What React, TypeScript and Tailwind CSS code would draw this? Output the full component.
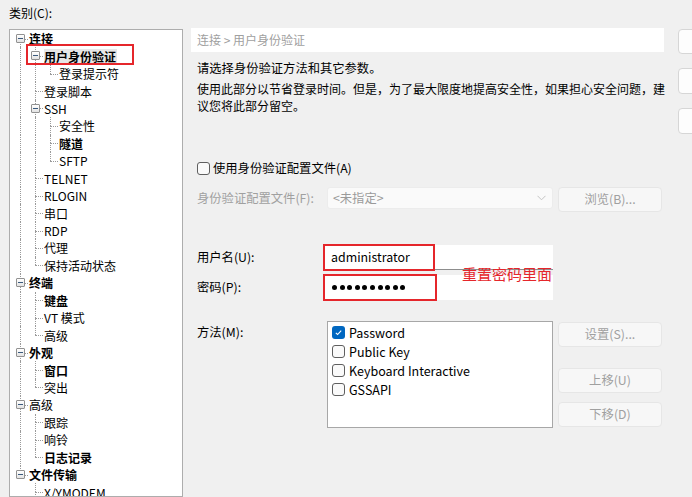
import React from 'react';

type Node = { label: string; bold?: boolean; sel?: boolean; children?: Node[] };

const tree: Node[] = [
  {
    label: '连接',
    bold: true,
    children: [
      { label: '用户身份验证', bold: true, sel: true, children: [{ label: '登录提示符' }] },
      { label: '登录脚本' },
      { label: 'SSH', children: [{ label: '安全性' }, { label: '隧道', bold: true }, { label: 'SFTP' }] },
      { label: 'TELNET' },
      { label: 'RLOGIN' },
      { label: '串口' },
      { label: 'RDP' },
      { label: '代理' },
      { label: '保持活动状态' },
    ],
  },
  { label: '终端', bold: true, children: [{ label: '键盘', bold: true }, { label: 'VT 模式' }, { label: '高级' }] },
  { label: '外观', bold: true, children: [{ label: '窗口', bold: true }, { label: '突出' }] },
  { label: '高级', children: [{ label: '跟踪' }, { label: '响铃' }, { label: '日志记录', bold: true }] },
  { label: '文件传输', bold: true, children: [{ label: 'X/YMODEM' }, { label: 'ZMODEM' }] },
];

type Row = { node: Node; guides: boolean[]; last: boolean; first: boolean };

function flatten(nodes: Node[], guides: boolean[], out: Row[]) {
  nodes.forEach((n, i) => {
    const last = i === nodes.length - 1;
    out.push({ node: n, guides, last, first: guides.length === 0 && i === 0 });
    if (n.children) flatten(n.children, [...guides, !last], out);
  });
  return out;
}

const rows = flatten(tree, [], []);

function Expander() {
  return (
    <div className="absolute left-[3px] top-[4px] flex h-[9px] w-[9px] items-center justify-center rounded-[1px] border border-[#919191] bg-gradient-to-b from-white to-[#e3e3e3]">
      <div className="h-[1px] w-[5px] bg-[#3b5a7d]" />
    </div>
  );
}

function TreeRow({ row }: { row: Row }) {
  const { node, guides, last, first } = row;
  return (
    <div className="flex h-[17.45px] items-stretch">
      {guides.map((g, i) => (
        <div key={i} className="relative w-[15px] shrink-0">
          {g && <div className="absolute bottom-0 left-[7px] top-0 border-l border-dotted border-[#9a9a9a]" />}
        </div>
      ))}
      <div className="relative w-[15px] shrink-0">
        {!first && <div className="absolute left-[7px] top-0 h-1/2 border-l border-dotted border-[#9a9a9a]" />}
        {!last && <div className="absolute bottom-0 left-[7px] top-1/2 border-l border-dotted border-[#9a9a9a]" />}
        <div className="absolute left-[7px] right-0 top-1/2 border-t border-dotted border-[#9a9a9a]" />
        {node.children && <Expander />}
      </div>
      <div className="flex items-center pl-[1px]">
        <span
          className={`whitespace-nowrap text-[12px] leading-[15px] text-black ${node.bold ? 'font-bold' : ''} ${
            node.sel ? 'bg-[#e6e6e6] pr-[1px]' : ''
          }`}
        >
          {node.label}
        </span>
      </div>
    </div>
  );
}

function Box({ checked }: { checked?: boolean }) {
  if (checked)
    return (
      <div className="flex h-[13px] w-[13px] shrink-0 items-center justify-center rounded-[3px] bg-[#0067c0]">
        <svg width="9" height="9" viewBox="0 0 9 9">
          <path d="M1.8 4.8 L3.6 6.5 L7.2 2.6" fill="none" stroke="white" strokeWidth="1.1" />
        </svg>
      </div>
    );
  return <div className="h-[13px] w-[13px] shrink-0 rounded-[3px] border border-[#5f5f5f] bg-[#fafafa]" />;
}

function GrayButton({ label }: { label: string }) {
  return (
    <div className="flex h-[25px] w-[104px] items-center justify-center rounded-[4px] border border-[#e6e6e6] bg-[#f7f7f7] text-[12.3px] text-[#a0a0a0]">
      {label}
    </div>
  );
}

export default function App() {
  const methods = [
    { label: 'Password', checked: true },
    { label: 'Public Key' },
    { label: 'Keyboard Interactive' },
    { label: 'GSSAPI' },
  ];

  return (
    <div className="relative flex h-[497px] w-[692px] overflow-hidden bg-[#f0f0f0] pl-[8px] font-['Noto_Sans_CJK_SC',sans-serif] text-black">
      {/* left: category tree */}
      <div className="flex w-[175px] shrink-0 flex-col">
        <div className="mt-[4px] h-[18px] pl-[1px] text-[12px] leading-[18px]">类别(C):</div>
        <div className="ml-[1px] mt-[7px] w-[174px] flex-1 overflow-hidden border border-[#adadad] bg-white pl-[3px]">
          {rows.map((r, i) => (
            <TreeRow key={i} row={r} />
          ))}
        </div>
      </div>

      {/* main panel */}
      <div className="ml-[8px] flex w-[473px] shrink-0 flex-col pt-[28px] text-[12.3px]">
        <div className="flex h-[24px] items-center bg-white pl-[6px] text-[12px] text-[#a0a0a0]">连接 &gt; 用户身份验证</div>
        <p className="mt-[8px] pl-[6px] leading-[17px]">请选择身份验证方法和其它参数。</p>
        <p className="mt-[3px] whitespace-nowrap pl-[6px] text-[12px] leading-[17px]">
          使用此部分以节省登录时间。但是，为了最大限度地提高安全性，如果担心安全问题，建
          <br />
          议您将此部分留空。
        </p>

        <div className="mt-[46px] flex h-[17px] items-center gap-[3px] pl-[6px]">
          <Box />
          <span className="leading-[17px]">使用身份验证配置文件(A)</span>
        </div>

        <div className="mt-[10px] flex items-start pl-[6px]">
          <div className="flex h-[22px] w-[130px] items-center text-[#a0a0a0]">身份验证配置文件(F):</div>
          <div className="flex h-[22px] w-[226px] items-center justify-between rounded-[3px] border border-[#ececec] bg-[#fafafa] pl-[5px] pr-[6px] text-[#9a9a9a]">
            <span>&lt;未指定&gt;</span>
            <svg width="9" height="6" viewBox="0 0 9 6">
              <path d="M0.5 0.8 L4.5 4.8 L8.5 0.8" fill="none" stroke="#c4c4c4" strokeWidth="1" />
            </svg>
          </div>
          <div className="ml-[5px]">
            <GrayButton label="浏览(B)..." />
          </div>
        </div>

        <div className="mt-[33px] flex pl-[6px]">
          <div className="flex h-[25px] w-[127px] items-center">用户名(U):</div>
          <div className="relative flex h-[25px] w-[229px] items-center border-b border-[#8d8d8d] bg-white pl-[7px] text-[12.4px]">
            administrator
            <div className="absolute -left-[1px] -top-[1px] h-[27px] w-[112px] border-2 border-[#e5262b]" />
          </div>
        </div>

        <div className="mt-[5px] flex pl-[6px]">
          <div className="flex h-[25px] w-[127px] items-center">密码(P):</div>
          <div className="relative flex h-[25px] w-[229px] items-center gap-[2.6px] bg-white pl-[8px]">
            {Array.from({ length: 10 }).map((_, i) => (
              <span key={i} className="h-[5px] w-[5px] rounded-full bg-black" />
            ))}
            <div className="absolute -left-[1px] -top-[1px] h-[27px] w-[114px] border-2 border-[#e5262b]" />
          </div>
          <span className="absolute left-[462px] top-[265px] text-[15px] leading-[18px] text-[#e5262b]">重置密码里面</span>
        </div>

        <div className="mt-[21px] flex items-start pl-[6px]">
          <div className="flex h-[22px] w-[130px] items-center">方法(M):</div>
          <div className="h-[107px] w-[226px] border border-[#a7a7a7] bg-white pl-[4px] pt-[1px]">
            {methods.map((m) => (
              <div key={m.label} className="flex h-[19px] items-center gap-[4px]">
                <Box checked={m.checked} />
                <span className="text-[12.5px] leading-[19px]">{m.label}</span>
              </div>
            ))}
          </div>
          <div className="ml-[5px] mt-[1px] flex flex-col">
            <GrayButton label="设置(S)..." />
            <div className="mt-[21px]">
              <GrayButton label="上移(U)" />
            </div>
            <div className="mt-[9px]">
              <GrayButton label="下移(D)" />
            </div>
          </div>
        </div>
      </div>

      {/* right: dialog buttons (clipped) */}
      <div className="ml-[14px] flex w-[40px] shrink-0 flex-col pt-[29px]">
        <div className="h-[25px] rounded-[4px] border border-[#d6d6d6] bg-[#fdfdfd]" />
        <div className="mt-[14px] h-[26px] rounded-[4px] border border-[#d6d6d6] bg-[#fdfdfd]" />
        <div className="mt-[14px] h-[26px] rounded-[4px] border border-[#d6d6d6] bg-[#fdfdfd]" />
      </div>

      {/* annotation around selected tree item */}
      <div className="absolute left-[26px] top-[44px] h-[21px] w-[108px] border-2 border-[#e5262b]" />
    </div>
  );
}
